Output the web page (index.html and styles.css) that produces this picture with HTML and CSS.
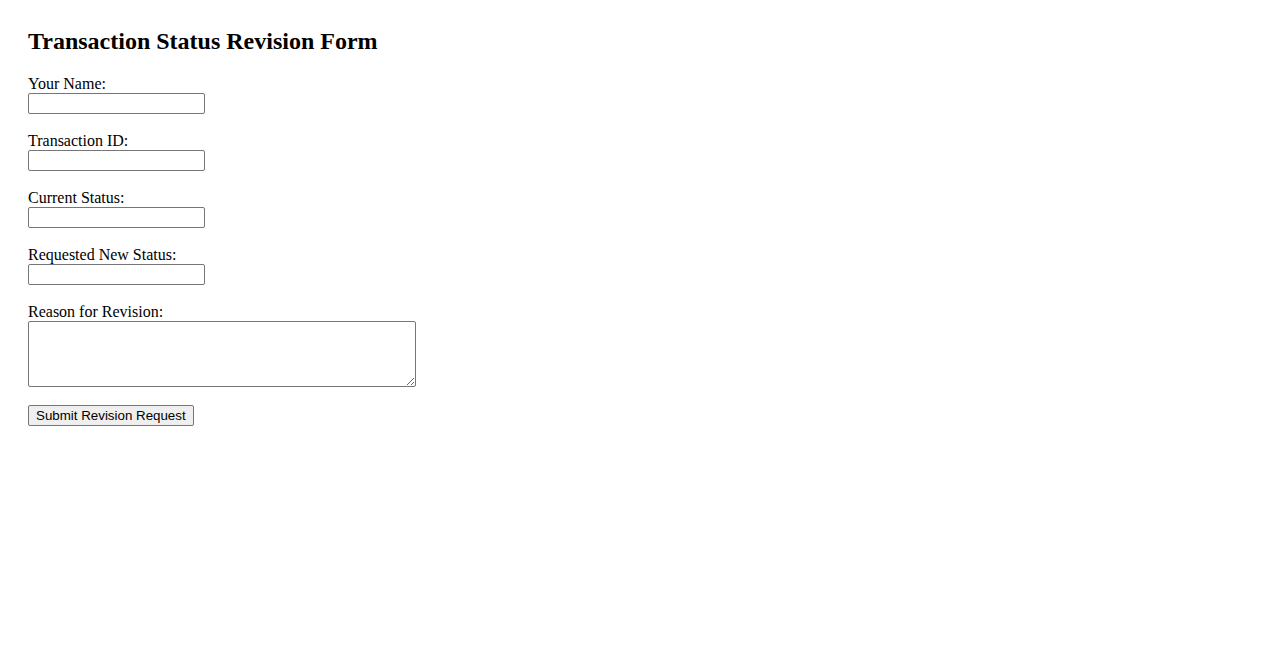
FILE: index.html
```html
<!DOCTYPE html>
<html lang="en">
<head>
<meta charset="utf-8">
<title>Transaction Status Revision Form</title>
<link rel="stylesheet" href="styles.css">
</head>
<body>
<main class="page">
  <h2 class="title">Transaction Status Revision Form</h2>
  <form class="form">
    <div class="field">
      <label class="label" for="name">Your Name:</label>
      <input class="input" type="text" id="name">
    </div>
    <div class="field">
      <label class="label" for="tid">Transaction ID:</label>
      <input class="input" type="text" id="tid">
    </div>
    <div class="field">
      <label class="label" for="cur">Current Status:</label>
      <input class="input" type="text" id="cur">
    </div>
    <div class="field">
      <label class="label" for="new">Requested New Status:</label>
      <input class="input" type="text" id="new">
    </div>
    <div class="field field-last">
      <label class="label" for="reason">Reason for Revision:</label>
      <textarea class="textarea" id="reason"></textarea>
    </div>
    <button class="submit" type="button">Submit Revision Request</button>
  </form>
</main>
</body>
</html>
```

FILE: styles.css
```css
html, body {
  margin: 0;
  padding: 0;
  background: #ffffff;
}
body {
  font-family: "Liberation Serif", "Times New Roman", serif;
  font-size: 16px;
  color: #000;
}
.page {
  padding: 27px 28px 28px;
}
.title {
  margin: 0 0 19px 0;
  font-size: 24px;
  font-weight: bold;
  line-height: 28px;
}
.form {
  display: flex;
  flex-direction: column;
  align-items: flex-start;
}
.field {
  display: flex;
  flex-direction: column;
  align-items: flex-start;
  margin-bottom: 17px;
}
.field-last {
  margin-bottom: 18px;
}
.label {
  display: block;
  line-height: 19px;
  height: 19px;
}
.input {
  box-sizing: border-box;
  width: 177px;
  height: 21px;
  margin: 0;
  padding: 1px 2px;
  font-family: "Liberation Sans", Arial, sans-serif;
  font-size: 13.333px;
  border: 1px solid #767676;
  border-radius: 2px;
  background: #fff;
}
.textarea {
  box-sizing: border-box;
  width: 388px;
  height: 66px;
  margin: 0;
  padding: 2px;
  font-family: "Liberation Mono", monospace;
  font-size: 13.333px;
  border: 1px solid #767676;
  border-radius: 2px;
  background: #fff;
}
.submit {
  box-sizing: border-box;
  height: 21px;
  margin: 0;
  padding: 1px 7px;
  font-family: "Liberation Sans", Arial, sans-serif;
  font-size: 13.333px;
  color: #000;
  background: #efefef;
  border: 1px solid #767676;
  border-radius: 2px;
}
```
